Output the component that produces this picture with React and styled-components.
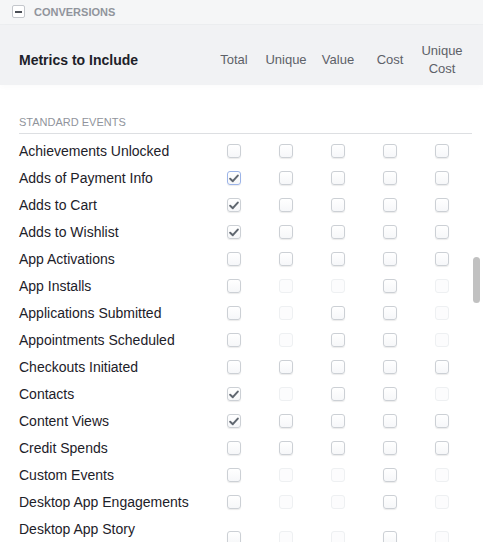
import React from "react";
import styled, { createGlobalStyle, css } from "styled-components";

const Global = createGlobalStyle`
  html, body { margin: 0; padding: 0; background: #fff; }
  body { font-family: "Liberation Sans", Arial, sans-serif; }
  * { box-sizing: border-box; }
`;

const Panel = styled.div`
  position: relative;
  width: 483px;
  height: 542px;
  overflow: hidden;
  background: #fff;
`;

const SectionBar = styled.div`
  display: flex;
  align-items: center;
  gap: 9px;
  height: 25px;
  padding: 0 0 1px 12px;
  background: #f5f6f7;
  border-bottom: 1px solid #eceef0;
`;

const CollapseBox = styled.span`
  display: flex;
  align-items: center;
  justify-content: center;
  width: 13px;
  height: 13px;
  background: #fff;
  border: 1px solid #c4c7cc;
  border-radius: 2px;
  &::after {
    content: "";
    width: 7px;
    height: 2px;
    background: #4b4f56;
  }
`;

const SectionTitle = styled.span`
  font-size: 11px;
  font-weight: 700;
  color: #90949c;
  text-transform: uppercase;
`;

const Grid = styled.div`
  display: grid;
  grid-template-columns: 189px repeat(5, 52px);
  align-items: center;
`;

const HeaderRow = styled(Grid)`
  height: 60px;
  padding: 9px 0 0 19px;
  background: #f1f2f4;
  box-shadow: 0 2px 6px rgba(0, 0, 0, 0.02);
`;

const MetricsTitle = styled.div`
  font-size: 14px;
  font-weight: 700;
  color: #1d2129;
`;

const ColHead = styled.div`
  font-size: 13px;
  line-height: 18px;
  color: #5d6168;
  text-align: center;
  white-space: pre-line;
`;

const Body = styled.div`
  padding: 0 11px 0 19px;
`;

const GroupTitle = styled.div`
  padding: 30px 0 4px;
  font-size: 11px;
  line-height: 14px;
  color: #90949c;
  text-transform: uppercase;
  border-bottom: 1px solid #dddfe2;
`;

const List = styled.div`
  padding-top: 3.5px;
`;

const Row = styled(Grid)`
  padding: 4.5px 0;
`;

const Label = styled.div`
  font-size: 14px;
  line-height: 18px;
  color: #1d2129;
  padding-right: 4px;
`;

const Cell = styled.div`
  display: flex;
  justify-content: center;
  align-items: center;
`;

const Box = styled.span`
  display: flex;
  align-items: center;
  justify-content: center;
  width: 14px;
  height: 14px;
  border-radius: 3px;
  border: 1px solid #ccd0d5;
  background: linear-gradient(#fff, #f6f7f9);
  box-shadow: 0 1px 1px rgba(0, 0, 0, 0.08);
  ${(p) =>
    p.$focused &&
    css`
      border-color: #9cb4e8;
    `}
  ${(p) =>
    p.$disabled &&
    css`
      border-color: #eef0f2;
      background: #fcfcfd;
      box-shadow: none;
    `}
`;

const ScrollThumb = styled.div`
  position: absolute;
  left: 473px;
  top: 257px;
  width: 7px;
  height: 46px;
  border-radius: 4px;
  background: #c1c1c1;
`;

const Check = () => (
  <svg width="10" height="9" viewBox="0 0 10 9">
    <path d="M1.2 4.8 L3.8 7.2 L8.8 1.6" fill="none" stroke="#606770" strokeWidth="2" strokeLinecap="round" strokeLinejoin="round" />
  </svg>
);

const Checkbox = ({ state }) => (
  <Cell>
    <Box $disabled={state === "d"} $focused={state === "f"}>
      {(state === "c" || state === "f") && <Check />}
    </Box>
  </Cell>
);

const columns = ["Total", "Unique", "Value", "Cost", "Unique\nCost"];

// e = enabled, d = disabled, c = checked, f = checked+focused
const rows = [
  ["Achievements Unlocked", "eeeee"],
  ["Adds of Payment Info", "feeee"],
  ["Adds to Cart", "ceeee"],
  ["Adds to Wishlist", "ceeee"],
  ["App Activations", "eeeee"],
  ["App Installs", "edded"],
  ["Applications Submitted", "edeed"],
  ["Appointments Scheduled", "edeed"],
  ["Checkouts Initiated", "eeeee"],
  ["Contacts", "cdeed"],
  ["Content Views", "ceeee"],
  ["Credit Spends", "eeeee"],
  ["Custom Events", "edded"],
  ["Desktop App Engagements", "edded"],
  ["Desktop App Story Engagements", "edded"],
];

export default function App() {
  return (
    <>
      <Global />
      <Panel>
        <SectionBar>
          <CollapseBox />
          <SectionTitle>Conversions</SectionTitle>
        </SectionBar>
        <HeaderRow>
          <MetricsTitle>Metrics to Include</MetricsTitle>
          {columns.map((c) => (
            <ColHead key={c}>{c}</ColHead>
          ))}
        </HeaderRow>
        <Body>
          <GroupTitle>Standard Events</GroupTitle>
          <List>
            {rows.map(([label, states]) => (
              <Row key={label}>
                <Label>{label}</Label>
                {states.split("").map((s, i) => (
                  <Checkbox key={i} state={s} />
                ))}
              </Row>
            ))}
          </List>
        </Body>
        <ScrollThumb />
      </Panel>
    </>
  );
}
